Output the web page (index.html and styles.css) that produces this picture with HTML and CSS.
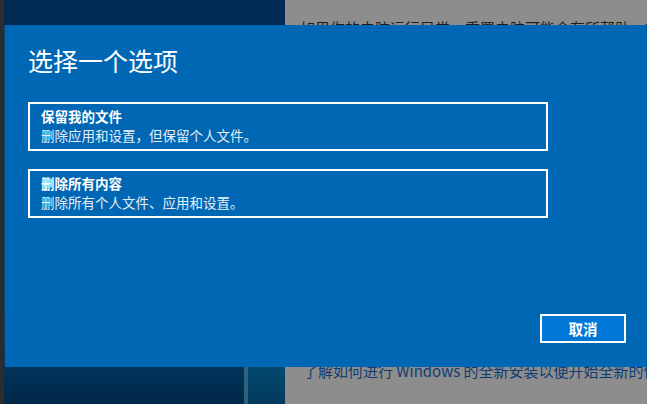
FILE: index.html
```html
<!DOCTYPE html>
<html lang="zh-CN">

<head>
  <meta charset="UTF-8">
  <meta name="viewport" content="width=device-width, initial-scale=1.0">
  <title>重置此电脑</title>
  <link rel="stylesheet" href="styles.css">
</head>

<body>

  <div class="screen">
    <!-- 左侧窗口边 -->
    <div class="edge"></div>

    <!-- 桌面背景 -->
    <div class="desktop">
      <div class="desktop-top"></div>
      <div class="desktop-bottom">
        <div class="tile-line"></div>
        <div class="tile"></div>
      </div>
    </div>

    <!-- 设置页面（被遮罩变暗） -->
    <div class="settings">
      <p class="settings-text">如果你的电脑运行异常，重置电脑可能会有所帮助。重置时，你可以选择保留个人文件或删除它们</p>
      <p class="settings-link">了解如何进行 Windows 的全新安装以便开始全新的体验</p>
    </div>

    <!-- 重置对话框 -->
    <div class="dialog">
      <h1 class="dialog-title">选择一个选项</h1>

      <div class="options">
        <div class="option">
          <div class="option-name">保留我的文件</div>
          <div class="option-desc">删除应用和设置，但保留个人文件。</div>
        </div>
        <div class="option">
          <div class="option-name">删除所有内容</div>
          <div class="option-desc">删除所有个人文件、应用和设置。</div>
        </div>
      </div>

      <div class="actions">
        <button class="btn-cancel">取消</button>
      </div>
    </div>
  </div>

</body>

</html>
```

FILE: styles.css
```css
/* 基本样式 */
body {
  margin: 0;
  padding: 0;
  font-family: "Noto Sans CJK SC", "Liberation Sans", sans-serif;
  overflow: hidden;
}

.screen {
  position: relative;
  display: flex;
  width: 647px;
  height: 404px;
  overflow: hidden;
}

.edge {
  width: 4px;
  background-color: #2c2c2c;
  flex-shrink: 0;
}

/* 桌面 */
.desktop {
  width: 281px;
  display: flex;
  flex-direction: column;
  flex-shrink: 0;
}

.desktop-top {
  height: 25px;
  background-color: #012b55;
}

.desktop-bottom {
  flex: 1;
  display: flex;
  justify-content: flex-end;
  background: linear-gradient(to bottom, #02497d 0%, #02497d 75%, #012848 100%);
}

.tile-line {
  width: 4px;
  background-color: #3f7a8f;
  opacity: 0.7;
}

.tile {
  width: 37px;
  background: linear-gradient(to bottom, #035a86 0%, #035a86 80%, #023a5c 100%);
}

/* 设置页面 */
.settings {
  flex: 1;
  background-color: #8d8d8d;
  padding: 18px 0 0 15px;
  white-space: nowrap;
  overflow: hidden;
}

.settings-text {
  margin: 0;
  font-size: 15px;
  line-height: 20px;
  color: #1c1c1c;
}

.settings-link {
  margin: 323px 0 0 3px;
  font-size: 15px;
  line-height: 20px;
  color: #0f3c72;
}

/* 对话框 */
.dialog {
  position: absolute;
  left: 5px;
  top: 25px;
  width: 642px;
  height: 342px;
  box-sizing: border-box;
  padding: 18px 0 0 23px;
  background-color: #0067b4;
  color: #fff;
  display: flex;
  flex-direction: column;
}

.dialog-title {
  margin: 0;
  font-size: 25px;
  font-weight: normal;
  line-height: 34px;
}

.options {
  display: flex;
  flex-direction: column;
  gap: 18px;
  margin-top: 25px;
}

.option {
  width: 520px;
  height: 49px;
  box-sizing: border-box;
  border: 2px solid #fff;
  padding: 3px 0 0 11px;
}

.option-name {
  font-size: 13.5px;
  font-weight: bold;
  line-height: 19px;
}

.option-desc {
  font-size: 13.5px;
  line-height: 19px;
  color: #e6eef6;
}

.actions {
  display: flex;
  justify-content: flex-end;
  margin-top: auto;
  padding: 0 21px 24px 0;
}

.btn-cancel {
  width: 86px;
  height: 29px;
  box-sizing: border-box;
  border: 2px solid #fff;
  background-color: #0078d7;
  color: #fff;
  font-family: "Noto Sans CJK SC", "Liberation Sans", sans-serif;
  font-size: 14.5px;
  font-weight: bold;
  padding: 0;
}
```
